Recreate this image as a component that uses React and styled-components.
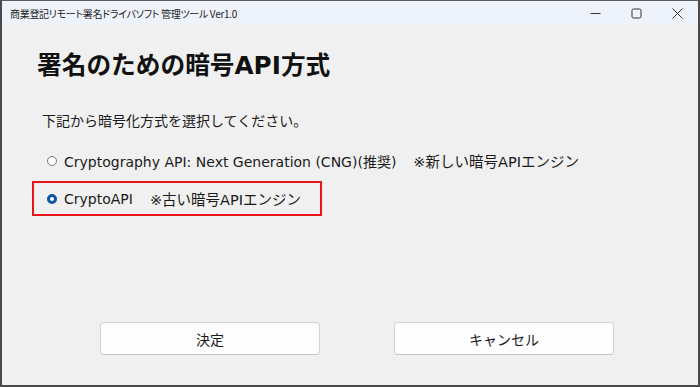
import React, { useState } from "react";
import styled, { createGlobalStyle } from "styled-components";

const GlobalStyle = createGlobalStyle`
  html, body {
    margin: 0;
    padding: 0;
    background: #f0f0f0;
  }
  body {
    font-family: "Noto Sans CJK JP", "Noto Sans", sans-serif;
  }
`;

const Window = styled.div`
  width: 700px;
  height: 387px;
  box-sizing: border-box;
  border-top: 1px solid #5a5a5a;
  border-left: 2px solid #4a4a4a;
  border-right: 2px solid #4a4a4a;
  border-bottom: 2px solid #4a4a4a;
  background: #f0f0f0;
  display: flex;
  flex-direction: column;
  overflow: hidden;
`;

const TitleBar = styled.div`
  height: 24px;
  flex: 0 0 24px;
  background: #eef2fa;
  display: flex;
  align-items: center;
  justify-content: space-between;
  padding-left: 8px;
`;

const Title = styled.span`
  font-size: 10px;
  letter-spacing: -0.3px;
  color: #222;
  font-feature-settings: "palt";
`;

const Controls = styled.div`
  display: flex;
  height: 100%;
`;

const ControlButton = styled.div`
  width: 41px;
  height: 100%;
  display: flex;
  align-items: center;
  justify-content: center;
  color: #333;
`;

const Content = styled.div`
  flex: 1;
  display: flex;
  flex-direction: column;
  padding: 25px 0 0 35px;
`;

const Heading = styled.h1`
  margin: 0;
  font-family: "DejaVu Sans", "Noto Sans CJK JP", sans-serif;
  font-size: 24.7px;
  font-weight: 700;
  color: #111;
  line-height: 32px;
`;

const Prompt = styled.p`
  margin: 28px 0 0 5px;
  font-size: 14px;
  line-height: 20px;
  color: #1a1a1a;
`;

const Options = styled.div`
  display: flex;
  flex-direction: column;
  align-items: flex-start;
  gap: 3px;
  margin-top: 13px;
  margin-left: -5px;
`;

const Option = styled.label`
  display: inline-flex;
  align-items: center;
  height: 31px;
  padding: 0 19px 0 13px;
  border: 2px solid ${(p) => (p.$highlight ? "#e8141c" : "transparent")};
  font-family: "DejaVu Sans", "Noto Sans CJK JP", sans-serif;
  font-size: 14px;
  color: #1a1a1a;
  cursor: pointer;
`;

const Radio = styled.span`
  width: 10px;
  height: 10px;
  box-sizing: border-box;
  border-radius: 50%;
  margin-right: 7px;
  flex: 0 0 auto;
  border: ${(p) => (p.$checked ? "3px solid #0b57a8" : "1px solid #7a7a7a")};
  background: #fff;
`;

const Note = styled.span`
  margin-left: 17px;
  font-size: 14.5px;
`;

const ButtonRow = styled.div`
  display: flex;
  gap: 74px;
  margin-top: auto;
  margin-bottom: 30px;
  padding-left: 63px;
`;

const Button = styled.button`
  width: 220px;
  height: 33px;
  background: #fdfdfd;
  border: 1px solid #d3d3d3;
  border-bottom-color: #c4c4c4;
  border-radius: 4px;
  font-family: "Noto Sans CJK JP", sans-serif;
  font-size: 14px;
  color: #1a1a1a;
  cursor: pointer;
`;

const options = [
  {
    id: "cng",
    label: "Cryptography API: Next Generation (CNG)(推奨)",
    note: "※新しい暗号APIエンジン",
  },
  { id: "capi", label: "CryptoAPI", note: "※古い暗号APIエンジン" },
];

export default function App() {
  const [selected, setSelected] = useState("capi");

  return (
    <>
      <GlobalStyle />
      <Window>
        <TitleBar>
          <Title>商業登記リモート署名ドライバソフト 管理ツール Ver1.0</Title>
          <Controls>
            <ControlButton>
              <svg width="11" height="11" viewBox="0 0 11 11">
                <path d="M0.5 5.5h10" stroke="#333" strokeWidth="1" />
              </svg>
            </ControlButton>
            <ControlButton>
              <svg width="11" height="11" viewBox="0 0 11 11">
                <rect x="1" y="1" width="9" height="9" rx="1.5" fill="none" stroke="#333" strokeWidth="1" />
              </svg>
            </ControlButton>
            <ControlButton>
              <svg width="11" height="11" viewBox="0 0 11 11">
                <path d="M0.5 0.5l10 10M10.5 0.5l-10 10" stroke="#333" strokeWidth="1" />
              </svg>
            </ControlButton>
          </Controls>
        </TitleBar>
        <Content>
          <Heading>署名のための暗号API方式</Heading>
          <Prompt>下記から暗号化方式を選択してください。</Prompt>
          <Options>
            {options.map((o) => (
              <Option
                key={o.id}
                $highlight={selected === o.id}
                onClick={() => setSelected(o.id)}
              >
                <Radio $checked={selected === o.id} />
                {o.label}
                <Note>{o.note}</Note>
              </Option>
            ))}
          </Options>
          <ButtonRow>
            <Button>決定</Button>
            <Button>キャンセル</Button>
          </ButtonRow>
        </Content>
      </Window>
    </>
  );
}
